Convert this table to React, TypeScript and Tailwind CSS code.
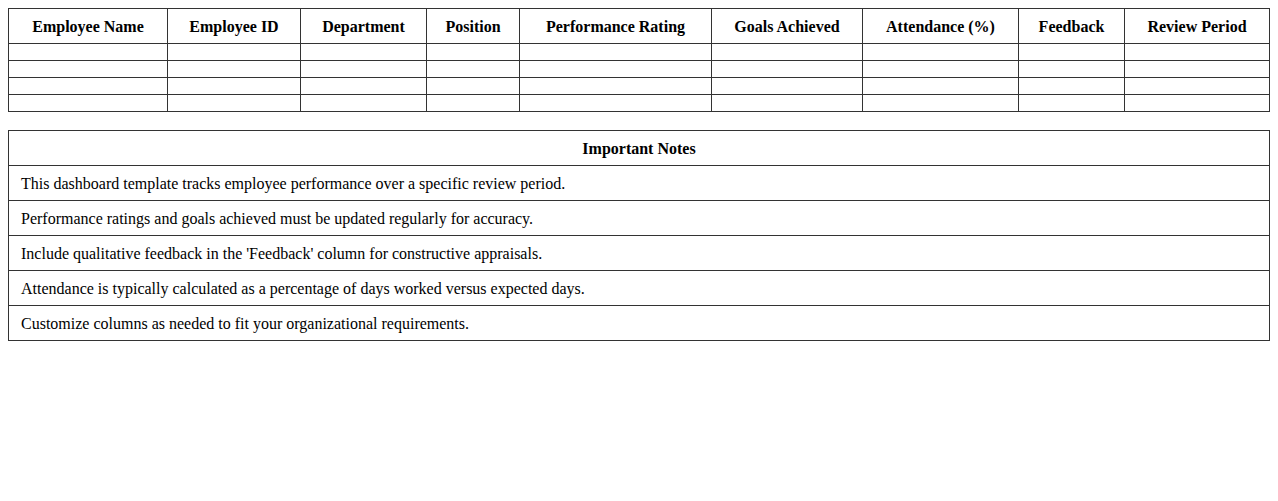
import React from "react";

const headers = [
  "Employee Name",
  "Employee ID",
  "Department",
  "Position",
  "Performance Rating",
  "Goals Achieved",
  "Attendance (%)",
  "Feedback",
  "Review Period",
];

const colClasses = [
  "w-[159px]",
  "w-[133px]",
  "w-[126px]",
  "w-[93px]",
  "w-[192px]",
  "w-[151px]",
  "w-[156px]",
  "w-[106px]",
  "w-[145px]",
];

const notes = [
  "This dashboard template tracks employee performance over a specific review period.",
  "Performance ratings and goals achieved must be updated regularly for accuracy.",
  "Include qualitative feedback in the 'Feedback' column for constructive appraisals.",
  "Attendance is typically calculated as a percentage of days worked versus expected days.",
  "Customize columns as needed to fit your organizational requirements.",
];

export default function App() {
  return (
    <div className="p-2 bg-white text-black text-[16px] leading-[normal] font-['Liberation_Serif','Times_New_Roman',serif] min-h-[501px]">
      <table className="w-[1261px] border-collapse table-fixed">
        <colgroup>
          {colClasses.map((c, i) => (
            <col key={i} className={c} />
          ))}
        </colgroup>
        <thead>
          <tr>
            {headers.map((h) => (
              <th key={h} className="border border-[#333] px-2 pt-[9px] pb-[7px] font-bold text-center">
                {h}
              </th>
            ))}
          </tr>
        </thead>
        <tbody>
          {[0, 1, 2, 3].map((r) => (
            <tr key={r}>
              {headers.map((h) => (
                <td key={h} className="border border-[#333] p-2"></td>
              ))}
            </tr>
          ))}
        </tbody>
      </table>
      <table className="w-full border-collapse mt-[18px]">
        <thead>
          <tr>
            <th className="border border-[#333] px-3 pt-[9px] pb-[7px] font-bold text-center">Important Notes</th>
          </tr>
        </thead>
        <tbody>
          {notes.map((n) => (
            <tr key={n}>
              <td className="border border-[#333] px-3 pt-[9px] pb-[7px] text-left">{n}</td>
            </tr>
          ))}
        </tbody>
      </table>
    </div>
  );
}
